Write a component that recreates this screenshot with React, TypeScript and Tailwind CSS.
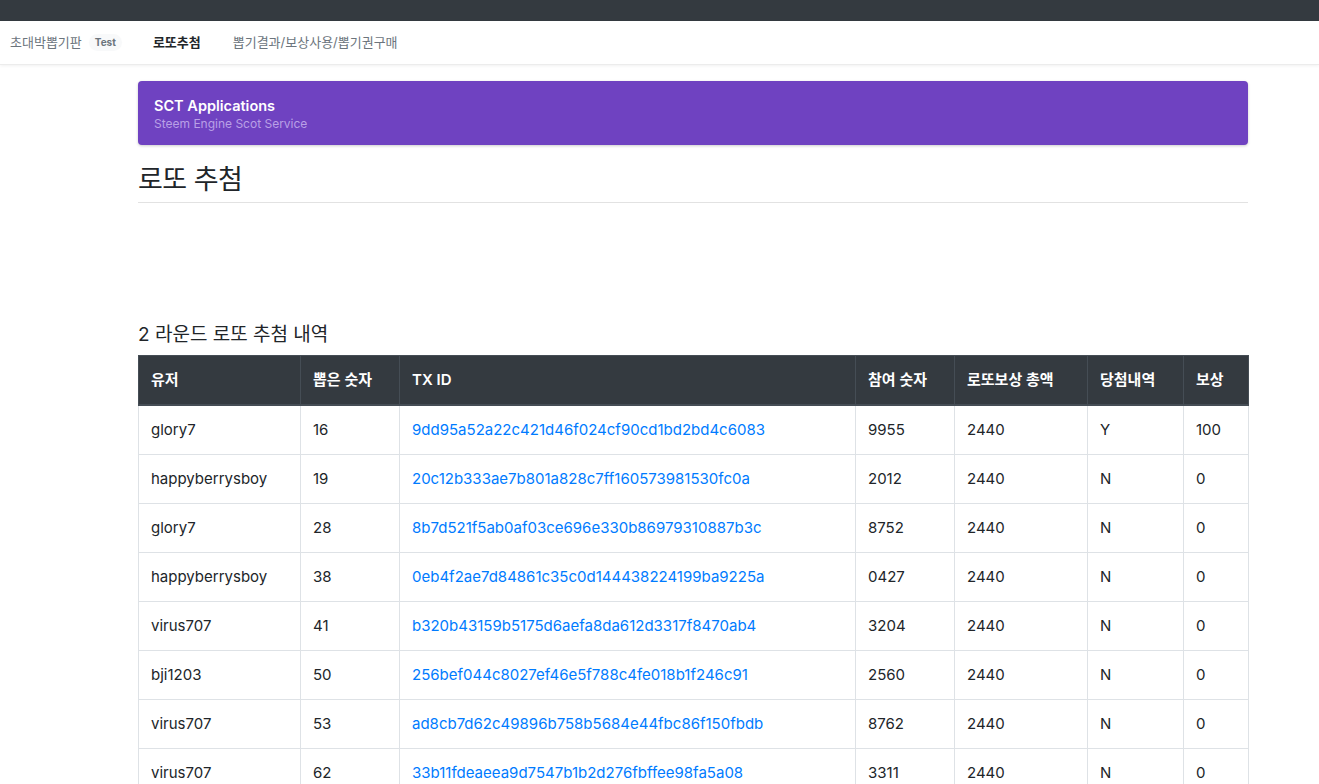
import React from "react";

const rows = [
  ["glory7", "16", "9dd95a52a22c421d46f024cf90cd1bd2bd4c6083", "9955", "2440", "Y", "100"],
  ["happyberrysboy", "19", "20c12b333ae7b801a828c7ff160573981530fc0a", "2012", "2440", "N", "0"],
  ["glory7", "28", "8b7d521f5ab0af03ce696e330b86979310887b3c", "8752", "2440", "N", "0"],
  ["happyberrysboy", "38", "0eb4f2ae7d84861c35c0d144438224199ba9225a", "0427", "2440", "N", "0"],
  ["virus707", "41", "b320b43159b5175d6aefa8da612d3317f8470ab4", "3204", "2440", "N", "0"],
  ["bji1203", "50", "256bef044c8027ef46e5f788c4fe018b1f246c91", "2560", "2440", "N", "0"],
  ["virus707", "53", "ad8cb7d62c49896b758b5684e44fbc86f150fbdb", "8762", "2440", "N", "0"],
  ["virus707", "62", "33b11fdeaeea9d7547b1b2d276fbffee98fa5a08", "3311", "2440", "N", "0"],
];

const headers = ["유저", "뽑은 숫자", "TX ID", "참여 숫자", "로또보상 총액", "당첨내역", "보상"];
const widths = ["w-[162px]", "w-[99px]", "w-[456px]", "w-[99px]", "w-[133px]", "w-[96px]", "w-[65px]"];

export default function App() {
  return (
    <div className="min-h-screen bg-white text-[#212529] font-['Inter','Noto_Sans_CJK_KR',sans-serif]">
      <div className="h-[21px] bg-[#343a40]" />
      <nav className="flex h-[44px] items-center border-b border-[#ececec] px-[10px] text-[13px] shadow-[0_1px_3px_rgba(0,0,0,0.06)]">
        <span className="text-[#6c757d]">초대박뽑기판</span>
        <span className="ml-[7px] rounded-full bg-[#f8f9fa] px-[6px] py-[1px] text-[10px] font-bold text-[#6c757d]">Test</span>
        <span className="ml-[31px] font-semibold text-[#212529]">로또추첨</span>
        <span className="ml-[32px] text-[#6c757d]">뽑기결과/보상사용/뽑기권구매</span>
      </nav>

      <main className="ml-[138px] w-[1110px] pt-[16px]">
        <div className="flex h-[64px] flex-col justify-center rounded-[4px] bg-[#6f42c1] px-[16px] shadow-[0_1px_3px_rgba(0,0,0,0.2)]">
          <div className="text-[14.5px] font-semibold leading-[20px] text-white">SCT Applications</div>
          <div className="text-[12px] leading-[15px] text-[#b9a0e6]">Steem Engine Scot Service</div>
        </div>

        <h3 className="mt-[18px] pb-[5px] text-[27px] font-normal leading-[34px] tracking-[-0.5px] border-b border-[#e2e2e2]">로또 추첨</h3>

        <h5 className="mt-[120px] mb-[8px] text-[19px] font-normal leading-[24px]">2 라운드 로또 추첨 내역</h5>

        <table className="w-[1110px] table-fixed border-collapse text-[15px]">
          <thead>
            <tr className="bg-[#343a40] text-white">
              {headers.map((h, i) => (
                <th
                  key={h}
                  className={`${widths[i]} border border-[#454d55] border-b-2 px-[12px] py-[12px] text-left text-[15px] font-semibold leading-[24px]`}
                >
                  {h}
                </th>
              ))}
            </tr>
          </thead>
          <tbody>
            {rows.map((r, ri) => (
              <tr key={ri}>
                {r.map((c, ci) => (
                  <td key={ci} className="border border-[#dee2e6] px-[12px] py-[12px] leading-[24px]">
                    {ci === 2 ? <a className="text-[#007bff]">{c}</a> : c}
                  </td>
                ))}
              </tr>
            ))}
          </tbody>
        </table>
      </main>
    </div>
  );
}
